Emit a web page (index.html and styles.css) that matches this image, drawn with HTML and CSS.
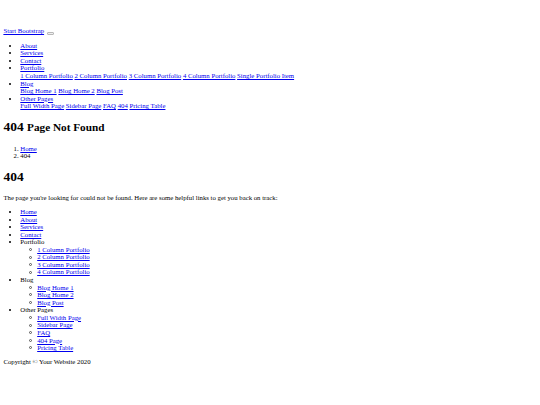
FILE: index.html
```
<!DOCTYPE html>
<html lang="en">
<head>
<meta charset="utf-8">
<title>404 - Start Bootstrap</title>
<link rel="stylesheet" href="styles.css">
</head>
<body class="page">
<nav class="navbar">
  <div class="container">
    <a class="brand" href="#">Start Bootstrap</a>
    <button class="toggler" type="button"><span class="toggler-icon"></span></button>
    <div class="collapse">
      <ul class="nav-list">
        <li><a href="#">About</a></li>
        <li><a href="#">Services</a></li>
        <li><a href="#">Contact</a></li>
        <li><a href="#">Portfolio</a>
          <div class="dropdown"><a href="#">1 Column Portfolio</a> <a href="#">2 Column Portfolio</a> <a href="#">3 Column Portfolio</a> <a href="#">4 Column Portfolio</a> <a href="#">Single Portfolio Item</a></div>
        </li>
        <li><a href="#">Blog</a>
          <div class="dropdown"><a href="#">Blog Home 1</a> <a href="#">Blog Home 2</a> <a href="#">Blog Post</a></div>
        </li>
        <li><a href="#">Other Pages</a>
          <div class="dropdown"><a href="#">Full Width Page</a> <a href="#">Sidebar Page</a> <a href="#">FAQ</a> <a href="#">404</a> <a href="#">Pricing Table</a></div>
        </li>
      </ul>
    </div>
  </div>
</nav>
<div class="container">
  <h1 class="title">404 <small class="subtitle">Page Not Found</small></h1>
  <ol class="crumbs">
    <li><a href="#">Home</a></li>
    <li>404</li>
  </ol>
  <div class="jumbotron">
    <h1 class="display">404</h1>
    <p class="lead">The page you're looking for could not be found. Here are some helpful links to get you back on track:</p>
    <ul class="links">
      <li><a href="#">Home</a></li>
      <li><a href="#">About</a></li>
      <li><a href="#">Services</a></li>
      <li><a href="#">Contact</a></li>
      <li>Portfolio
        <ul class="sublinks">
          <li><a href="#">1 Column Portfolio</a></li>
          <li><a href="#">2 Column Portfolio</a></li>
          <li><a href="#">3 Column Portfolio</a></li>
          <li><a href="#">4 Column Portfolio</a></li>
        </ul>
      </li>
      <li>Blog
        <ul class="sublinks">
          <li><a href="#">Blog Home 1</a></li>
          <li><a href="#">Blog Home 2</a></li>
          <li><a href="#">Blog Post</a></li>
        </ul>
      </li>
      <li>Other Pages
        <ul class="sublinks">
          <li><a href="#">Full Width Page</a></li>
          <li><a href="#">Sidebar Page</a></li>
          <li><a href="#">FAQ</a></li>
          <li><a href="#">404 Page</a></li>
          <li><a href="#">Pricing Table</a></li>
        </ul>
      </li>
    </ul>
  </div>
</div>
<footer class="footer">
  <div class="container">
    <p class="copy">Copyright &copy; Your Website 2020</p>
  </div>
</footer>
</body>
</html>
```

FILE: styles.css
```
.page {
  margin: 3.4px;
  font-family: "Liberation Serif", "Times New Roman", serif;
  font-size: 6.75px;
  line-height: 7.56px;
  color: #000;
  background: #fff;
}
.page a {
  color: #0000ee;
}
.navbar {
  padding-top: 23.6px;
}
.toggler {
  display: inline-block;
  width: 7px;
  height: 3px;
  padding: 0;
  margin: 0 0 0 1px;
  border: 1px solid #b8b8b8;
  border-radius: 1px;
  background: #efefef;
  vertical-align: -1px;
}
.toggler-icon {
  display: block;
}
.nav-list,
.crumbs,
.links {
  margin: 6.75px 0;
  padding-left: 16.9px;
}
.nav-list,
.links {
  list-style-type: disc;
}
.sublinks {
  margin: 0;
  padding-left: 16.9px;
  list-style: none;
}
.sublinks li::before {
  content: "";
  display: inline-block;
  box-sizing: border-box;
  width: 3px;
  height: 3px;
  margin-left: -8px;
  margin-right: 5px;
  border: 0.7px solid #555;
  border-radius: 50%;
  vertical-align: 0.7px;
}
.title,
.display {
  font-size: 13.5px;
  line-height: 15.8px;
  font-weight: bold;
  margin: 9.04px 0;
}
.subtitle {
  font-size: 11.25px;
}
.lead {
  margin: 6.75px 0;
}
.copy {
  margin: 6.75px 0;
}
```
